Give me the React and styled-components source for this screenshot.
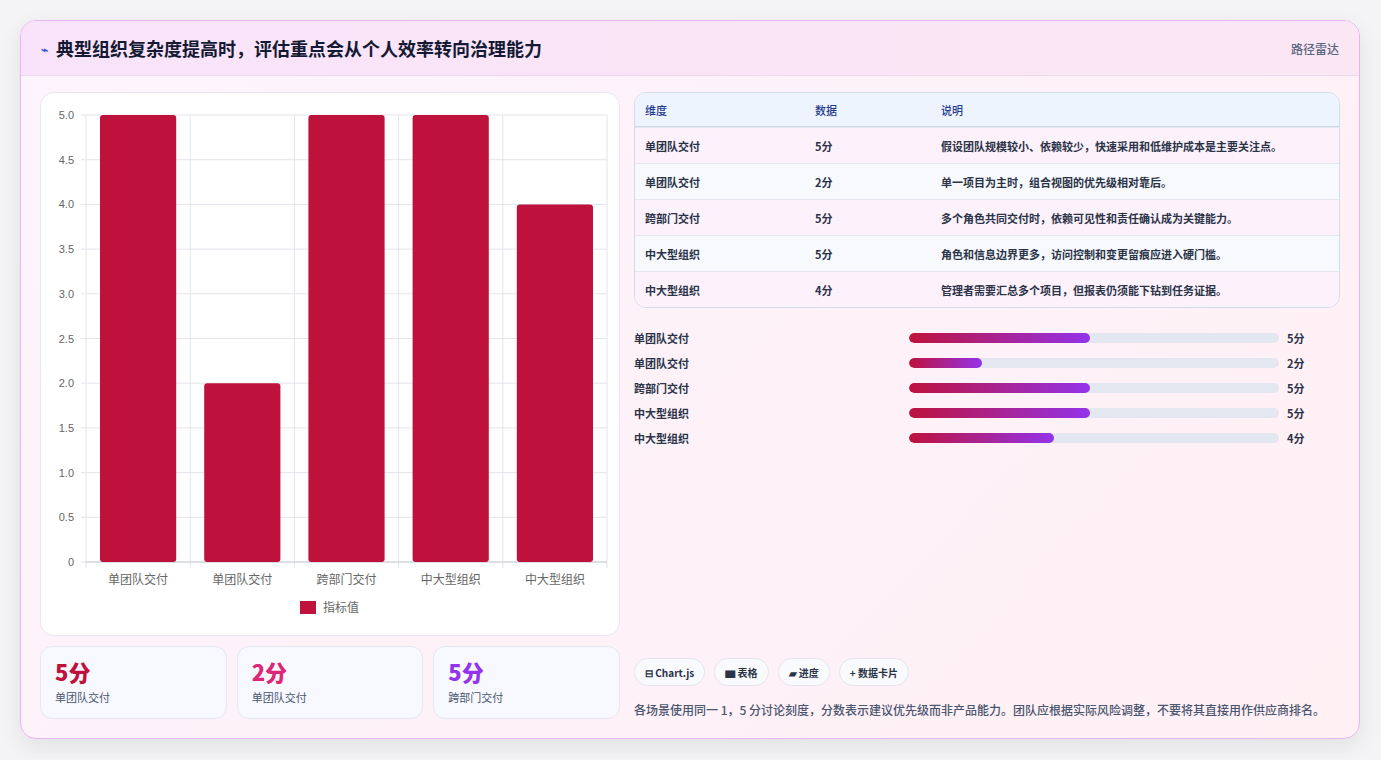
import React from "react";
import styled, { createGlobalStyle } from "styled-components";

const Global = createGlobalStyle`
  html,body{margin:0;padding:0;background:#f4f4f6;}
  body{font-family:"Noto Sans CJK SC","Noto Sans",sans-serif;}
`;
const Page = styled.div`padding:20px 21px 20px 20px;`;
const Card = styled.div`
  height:719px;box-sizing:border-box;border:1px solid #e7b6ef;border-radius:16px;
  background:linear-gradient(135deg,#fdf4fd,#fff0f4);box-shadow:0 8px 24px rgba(0,0,0,.08);
  display:flex;flex-direction:column;overflow:hidden;
`;
const Header = styled.div`
  height:55px;box-sizing:border-box;display:flex;align-items:center;justify-content:space-between;
  padding:0 20px;background:linear-gradient(90deg,#f9e3fa,#fbe7f4);border-bottom:1px solid #ecd9ee;
`;
const Title = styled.h1`margin:0;font-size:18px;font-weight:700;color:#141a33;display:flex;align-items:center;gap:8px;`;
const Tag = styled.span`font-size:12px;color:#5a6680;font-weight:500;`;
const Body = styled.div`flex:1;display:grid;grid-template-columns:580px 1fr;gap:14px;padding:16px 19px 18px 19px;`;
const Col = styled.div`display:flex;flex-direction:column;gap:10px;min-height:0;`;
const ChartBox = styled.div`height:544px;box-sizing:border-box;background:#fff;border:1px solid #ece4ef;border-radius:14px;`;
const Stats = styled.div`display:grid;grid-template-columns:repeat(3,1fr);gap:10px;`;
const Stat = styled.div`height:73px;box-sizing:border-box;border:1px solid #e6e6f4;border-radius:12px;background:#f8f9fe;padding:10px 14px;`;
const Big = styled.div`font-size:22px;font-weight:800;color:${p=>p.c};line-height:28px;`;
const Small = styled.div`font-size:11px;color:#4a5570;margin-top:4px;`;
const Table = styled.div`border:1px solid #d2dbe8;border-radius:12px;overflow:hidden;`;
const Row = styled.div`
  display:grid;grid-template-columns:170px 126px 1fr;height:35px;align-items:center;padding-left:10px;
  font-size:11px;color:${p=>p.head?"#1e3a8a":"#2a3348"};font-weight:${p=>p.head?500:600};
  background:${p=>p.head?"#eef4fe":p.alt?"#f7f9fc":"#fdf1fb"};
  border-top:${p=>p.head?"none":"1px solid #e3e7ef"};
  ${p=>p.head&&"height:33px;border-bottom:1px solid #cfd8e6;"}
`;
const Bars = styled.div`display:flex;flex-direction:column;gap:9px;margin-top:12px;`;
const BarRow = styled.div`display:grid;grid-template-columns:267px 370px 1fr;align-items:center;gap:8px;height:16px;font-size:11px;font-weight:600;color:#2a3348;`;
const Track = styled.div`height:10px;border-radius:5px;background:#e3e8f0;overflow:hidden;`;
const Fill = styled.div`height:100%;border-radius:5px;background:linear-gradient(90deg,#be123c,#9333ea);`;
const Spacer = styled.div`flex:1;`;
const Chips = styled.div`display:flex;gap:9px;`;
const Chip = styled.div`height:28px;box-sizing:border-box;padding:0 10px;border:1px solid #e3e6ef;border-radius:14px;background:#f9fafc;display:flex;align-items:center;gap:4px;font-size:10px;font-weight:700;color:#2a3348;`;
const Note = styled.p`margin:4px 0 0;font-size:12px;line-height:20px;color:#4a5570;font-weight:500;`;

const data=[["单团队交付",5,"假设团队规模较小、依赖较少，快速采用和低维护成本是主要关注点。"],["单团队交付",2,"单一项目为主时，组合视图的优先级相对靠后。"],["跨部门交付",5,"多个角色共同交付时，依赖可见性和责任确认成为关键能力。"],["中大型组织",5,"角色和信息边界更多，访问控制和变更留痕应进入硬门槛。"],["中大型组织",4,"管理者需要汇总多个项目，但报表仍须能下钻到任务证据。"]];

function Chart(){
  const L=45,R=566,T=22,B=469,W=580;
  const ticks=[5,4.5,4,3.5,3,2.5,2,1.5,1,0.5,0];
  const cw=(R-L)/5;
  const y=v=>B-(B-T)*v/5;
  return <svg width={W} height={544} style={{display:"block"}}>
    {ticks.map(t=><g key={t}><line x1={L-5} x2={R} y1={y(t)} y2={y(t)} stroke="#e3e5ec"/>
      <text x={L-12} y={y(t)+4} fontSize="11" textAnchor="end" fill="#666" fontFamily="Liberation Sans">{t===0?"0":t.toFixed(1)}</text></g>)}
    {[0,1,2,3,4,5].map(i=><line key={i} x1={L+i*cw} x2={L+i*cw} y1={T} y2={B+6} stroke="#e3e5ec"/>)}
    <line x1={L} x2={R} y1={B} y2={B} stroke="#c8cbd6"/>
    {data.map((d,i)=><g key={i}><rect x={L+i*cw+14} y={y(d[1])} width={cw-28} height={B-y(d[1])} rx="3" fill="#be123c"/>
      <text x={L+i*cw+cw/2} y={B+22} fontSize="12" textAnchor="middle" fill="#666" fontFamily="Noto Sans CJK SC">{d[0]}</text></g>)}
    <rect x={259} y={508} width={16} height={13} fill="#be123c"/>
    <text x={282} y={519} fontSize="12" fill="#666" fontFamily="Noto Sans CJK SC">指标值</text>
  </svg>;
}

export default function App(){
  return <Page><Global/><Card>
    <Header><Title><span style={{fontSize:12,color:"#3b5bdb"}}>⌁</span>典型组织复杂度提高时，评估重点会从个人效率转向治理能力</Title><Tag>路径雷达</Tag></Header>
    <Body>
      <Col>
        <ChartBox><Chart/></ChartBox>
        <Stats>
          <Stat><Big c="#be123c">5分</Big><Small>单团队交付</Small></Stat>
          <Stat><Big c="#db2777">2分</Big><Small>单团队交付</Small></Stat>
          <Stat><Big c="#9333ea">5分</Big><Small>跨部门交付</Small></Stat>
        </Stats>
      </Col>
      <Col>
        <Table>
          <Row head><span>维度</span><span>数据</span><span>说明</span></Row>
          {data.map((d,i)=><Row key={i} alt={i%2===1}><span>{d[0]}</span><span>{d[1]}分</span><span>{d[2]}</span></Row>)}
        </Table>
        <Bars>{data.map((d,i)=><BarRow key={i}><span>{d[0]}</span><Track><Fill style={{width:`${d[1]*9.8}%`}}/></Track><span>{d[1]}分</span></BarRow>)}</Bars>
        <Spacer/>
        <Chips><Chip>⊟ Chart.js</Chip><Chip>▆ 表格</Chip><Chip>▰ 进度</Chip><Chip>+ 数据卡片</Chip></Chips>
        <Note>各场景使用同一 1，5 分讨论刻度，分数表示建议优先级而非产品能力。团队应根据实际风险调整，不要将其直接用作供应商排名。</Note>
      </Col>
    </Body>
  </Card></Page>;
}
